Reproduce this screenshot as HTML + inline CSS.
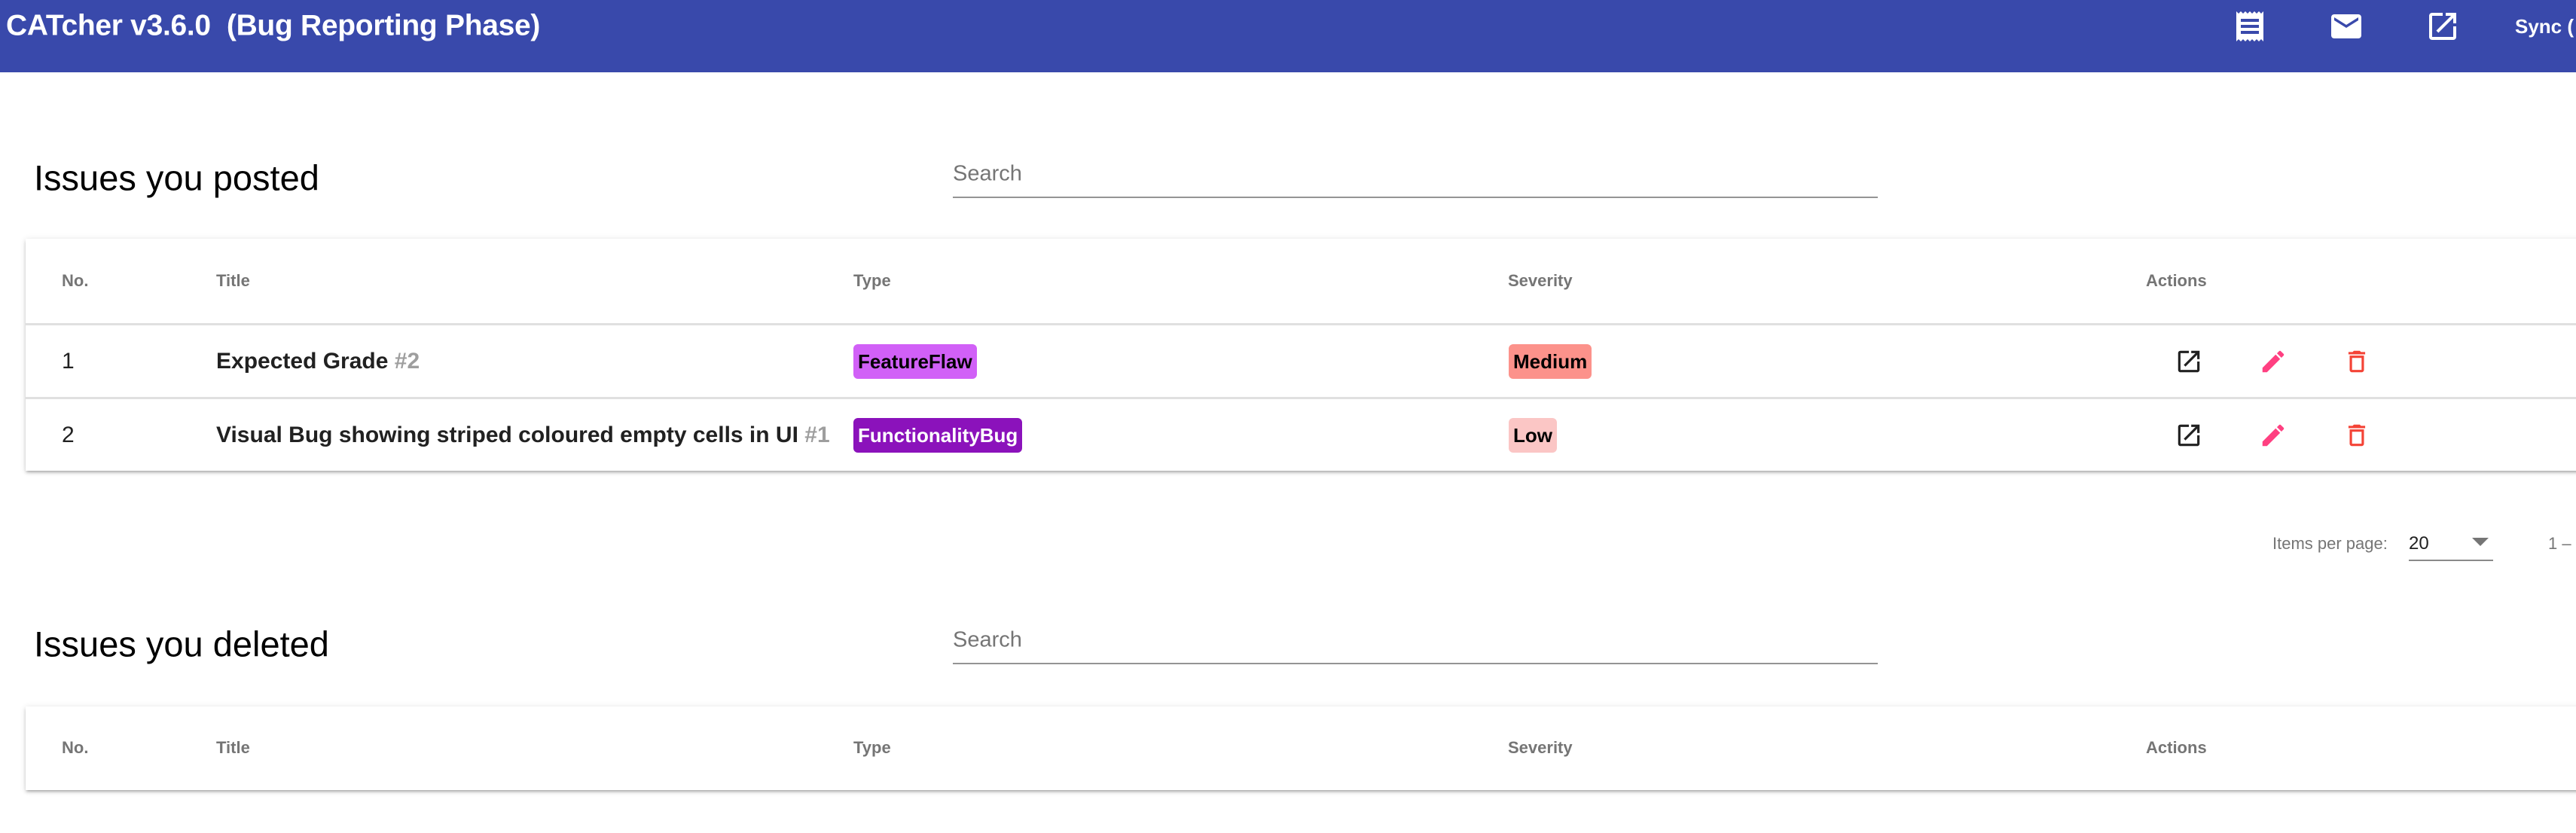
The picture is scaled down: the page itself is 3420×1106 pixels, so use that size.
<!DOCTYPE html>
<html><head><meta charset="utf-8"><style>
*{margin:0;padding:0;box-sizing:border-box}
body{width:3420px;height:1106px;overflow:hidden;background:#fff;font-family:"Liberation Sans",Arial,sans-serif;position:relative}
.abs{position:absolute;white-space:nowrap}
.hdr{position:absolute;left:0;top:0;width:3420px;height:96px;background:#3949ab}
.t{line-height:1;transform:translateY(-50%)}
.card{position:absolute;left:34px;width:3420px;background:#fff;box-shadow:0 3px 3px -2px rgba(0,0,0,.2),0 3px 4px 0 rgba(0,0,0,.14),0 1px 8px 0 rgba(0,0,0,.12)}
.hl{position:absolute;left:34px;width:3400px;height:3px;background:#e0e0e0}
.th{font-size:22px;color:#757575;font-weight:bold}
.td{font-size:30px;color:#212121}
.lbl{position:absolute;height:46px;border-radius:6px;font-size:26px;font-weight:bold;line-height:46px;padding:0 6px}
svg{position:absolute}
</style></head><body>
<div class="hdr"></div>
<div class="abs t" style="left:8px;top:34px;font-size:39px;font-weight:bold;color:#fff;letter-spacing:-0.3px">CATcher v3.6.0&nbsp; (Bug Reporting Phase)</div>
<svg style="left:2963px;top:11px" width="48" height="48" viewBox="0 0 24 24"><path fill="#fff" d="M18 17H6v-2h12v2zm0-4H6v-2h12v2zm0-4H6V7h12v2zM3 22l1.5-1.5L6 22l1.5-1.5L9 22l1.5-1.5L12 22l1.5-1.5L15 22l1.5-1.5L18 22l1.5-1.5L21 22V2l-1.5 1.5L18 2l-1.5 1.5L15 2l-1.5 1.5L12 2l-1.5 1.5L9 2 7.5 3.5 6 2 4.5 3.5 3 2v20z"/></svg>
<svg style="left:3091px;top:11px" width="48" height="48" viewBox="0 0 24 24"><path fill="#fff" d="M20 4H4c-1.1 0-1.99.9-1.99 2L2 18c0 1.1.9 2 2 2h16c1.1 0 2-.9 2-2V6c0-1.1-.9-2-2-2zm0 4l-8 5-8-5V6l8 5 8-5v2z"/></svg>
<svg style="left:3219px;top:11px" width="48" height="48" viewBox="0 0 24 24"><path fill="#fff" d="M19 19H5V5h7V3H5c-1.11 0-2 .9-2 2v14c0 1.1.89 2 2 2h14c1.1 0 2-.9 2-2v-7h-2v7zM14 3v2h3.59l-9.83 9.83 1.41 1.41L19 6.41V10h2V3h-7z"/></svg>
<div class="abs t" style="left:3339px;top:35px;font-size:26px;font-weight:bold;color:#fff">Sync (</div>

<div class="abs t" style="left:45px;top:236px;font-size:47px;color:#000">Issues you posted</div>
<div class="abs t" style="left:1265px;top:231px;font-size:29px;color:#757575">Search</div>
<div class="abs" style="left:1265px;top:261px;width:1228px;height:2px;background:#949494"></div>

<div class="card" style="top:317px;height:308px"></div>
<div class="abs t th" style="left:82px;top:373px">No.</div>
<div class="abs t th" style="left:287px;top:373px">Title</div>
<div class="abs t th" style="left:1133px;top:373px">Type</div>
<div class="abs t th" style="left:2002px;top:373px">Severity</div>
<div class="abs t th" style="left:2849px;top:373px">Actions</div>
<div class="hl" style="top:429px"></div>
<div class="hl" style="top:527px"></div>

<div class="abs t td" style="left:82px;top:480px">1</div>
<div class="abs t td" style="left:287px;top:480px;font-weight:bold">Expected Grade <span style="color:#9e9e9e">#2</span></div>
<div class="lbl" style="left:1133px;top:457px;background:#d160f7;color:#000">FeatureFlaw</div>
<div class="lbl" style="left:2003px;top:457px;background:#fc928b;color:#000">Medium</div>

<div class="abs t td" style="left:82px;top:578px">2</div>
<div class="abs t td" style="left:287px;top:578px;font-weight:bold">Visual Bug showing striped coloured empty cells in UI <span style="color:#9e9e9e">#1</span></div>
<div class="lbl" style="left:1133px;top:555px;background:#8b12bb;color:#fff">FunctionalityBug</div>
<div class="lbl" style="left:2003px;top:555px;background:#fbc6c5;color:#000">Low</div>

<svg style="left:2887px;top:461px" width="38" height="38" viewBox="0 0 24 24"><path fill="#212121" d="M19 19H5V5h7V3H5c-1.11 0-2 .9-2 2v14c0 1.1.89 2 2 2h14c1.1 0 2-.9 2-2v-7h-2v7zM14 3v2h3.59l-9.83 9.83 1.41 1.41L19 6.41V10h2V3h-7z"/></svg>
<svg style="left:2999px;top:461px" width="38" height="38" viewBox="0 0 24 24"><path fill="#ff4081" d="M3 17.25V21h3.75L17.81 9.94l-3.75-3.75L3 17.25zM20.71 7.04c.39-.39.39-1.020 0-1.41l-2.34-2.34c-.39-.39-1.02-.39-1.41 0l-1.83 1.83 3.75 3.75 1.83-1.83z"/></svg>
<svg style="left:3110px;top:461px" width="38" height="38" viewBox="0 0 24 24"><path fill="#f44336" d="M6 19c0 1.1.9 2 2 2h8c1.1 0 2-.9 2-2V7H6v12zM8 9h8v10H8V9zm7.5-5l-1-1h-5l-1 1H5v2h14V4z"/></svg>
<svg style="left:2887px;top:559px" width="38" height="38" viewBox="0 0 24 24"><path fill="#212121" d="M19 19H5V5h7V3H5c-1.11 0-2 .9-2 2v14c0 1.1.89 2 2 2h14c1.1 0 2-.9 2-2v-7h-2v7zM14 3v2h3.59l-9.83 9.83 1.41 1.41L19 6.41V10h2V3h-7z"/></svg>
<svg style="left:2999px;top:559px" width="38" height="38" viewBox="0 0 24 24"><path fill="#ff4081" d="M3 17.25V21h3.75L17.81 9.94l-3.75-3.75L3 17.25zM20.71 7.04c.39-.39.39-1.02 0-1.41l-2.34-2.34c-.39-.39-1.02-.39-1.41 0l-1.83 1.83 3.75 3.75 1.83-1.83z"/></svg>
<svg style="left:3110px;top:559px" width="38" height="38" viewBox="0 0 24 24"><path fill="#f44336" d="M6 19c0 1.1.9 2 2 2h8c1.1 0 2-.9 2-2V7H6v12zM8 9h8v10H8V9zm7.5-5l-1-1h-5l-1 1H5v2h14V4z"/></svg>

<div class="abs t" style="left:3017px;top:722px;font-size:22px;color:#757575">Items per page:</div>
<div class="abs t" style="left:3198px;top:722px;font-size:24px;color:#212121">20</div>
<div class="abs" style="left:3282px;top:714px;width:0;height:0;border-left:11px solid transparent;border-right:11px solid transparent;border-top:11px solid #757575"></div>
<div class="abs" style="left:3198px;top:743px;width:112px;height:2px;background:#8a8a8a"></div>
<div class="abs t" style="left:3383px;top:722px;font-size:22px;color:#757575">1 –</div>

<div class="abs t" style="left:45px;top:855px;font-size:47px;color:#000">Issues you deleted</div>
<div class="abs t" style="left:1265px;top:850px;font-size:29px;color:#757575">Search</div>
<div class="abs" style="left:1265px;top:880px;width:1228px;height:2px;background:#949494"></div>

<div class="card" style="top:938px;height:111px"></div>
<div class="abs t th" style="left:82px;top:993px">No.</div>
<div class="abs t th" style="left:287px;top:993px">Title</div>
<div class="abs t th" style="left:1133px;top:993px">Type</div>
<div class="abs t th" style="left:2002px;top:993px">Severity</div>
<div class="abs t th" style="left:2849px;top:993px">Actions</div>
</body></html>
